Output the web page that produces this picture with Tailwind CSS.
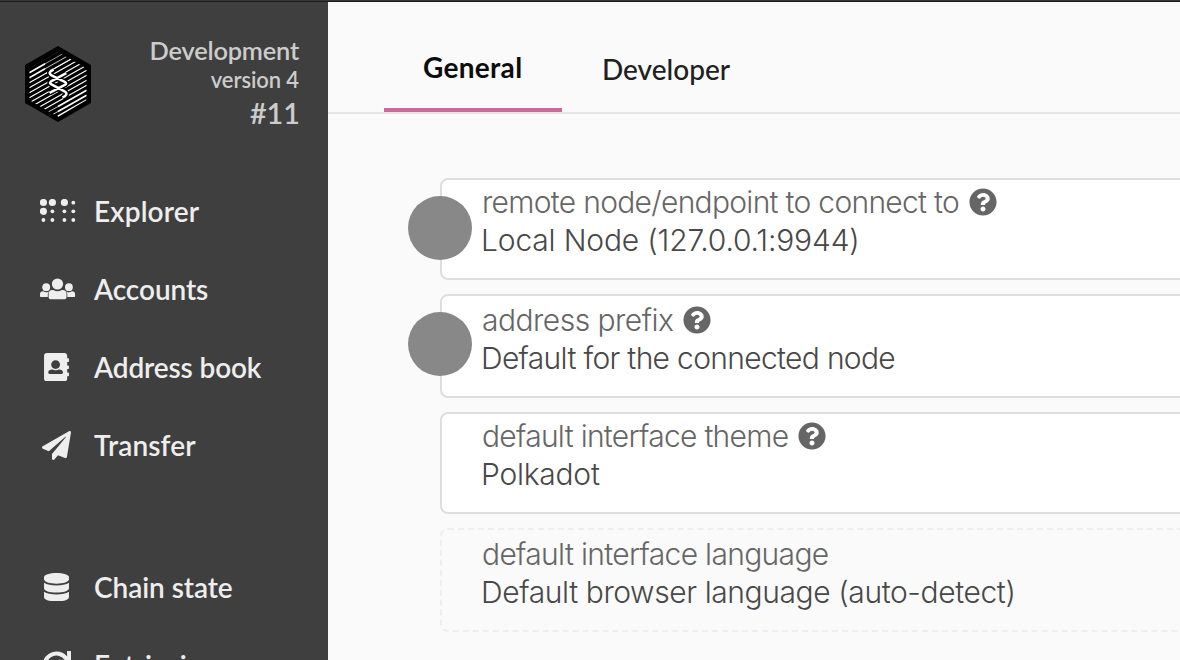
<!DOCTYPE html>
<html lang="en">
<head>
<meta charset="utf-8">
<title>Settings</title>
<script src="https://cdn.jsdelivr.net/npm/@tailwindcss/browser@4"></script>
</head>
<body class="h-[660px] w-[1180px] overflow-hidden bg-[#fafafa]">
<svg class="hidden"><symbol id="help" viewBox="0 0 512 512"><path d="M504 256c0 136.997-111.043 248-248 248S8 392.997 8 256C8 119.083 119.043 8 256 8s248 111.083 248 248zM262.655 90c-54.497 0-89.255 22.957-116.549 63.758-3.536 5.286-2.353 12.415 2.715 16.258l34.699 26.310c5.205 3.947 12.621 3.008 16.665-2.122 17.864-22.658 30.113-35.797 57.303-35.797 20.429 0 45.698 13.148 45.698 32.958 0 14.976-12.363 22.667-32.534 33.976C247.128 238.528 216 254.941 216 296v4c0 6.627 5.373 12 12 12h56c6.627 0 12-5.373 12-12v-1.333c0-28.462 83.186-29.647 83.186-106.667 0-58.002-60.165-102-116.531-102zM256 338c-25.365 0-46 20.635-46 46 0 25.364 20.635 46 46 46s46-20.636 46-46c0-25.365-20.635-46-46-46z"/></symbol></svg>
<div class="flex h-[660px] flex-col overflow-hidden">
  <div class="h-[2px] shrink-0 border-b border-[#1b1b1b] bg-[#363636]"></div>
  <div class="flex min-h-0 grow">
    <aside class="h-[658px] w-[328px] shrink-0 overflow-hidden bg-[#3f3f3f] font-[Lato,sans-serif] font-semibold">
      <header class="flex h-[170px] items-start justify-between pt-[33px] pr-[29px] pl-[25px] text-[#cccccc]">
        <svg class="mt-[11px] h-[76px] w-[66px]" viewBox="0 0 66 76">
          <defs><clipPath id="hex"><path d="M4.3 22.5 33 6l28.7 16.5v31.500L33 71 4.300 54z"/></clipPath></defs>
          <path d="M33 0 66 19v38L33 76 0 57V19z" fill="#000"/>
          <g clip-path="url(#hex)" stroke="#fff">
            <path stroke-width=".6" d="M4.300 21.700 37.500 2.900M20 17.800 42 5.400"/>
            <path stroke-width="1.600" d="M4.300 26.700 20 17.800M4.300 31.700 20 22.800"/>
            <path stroke-width=".8" d="M20 22.800 61.700-.8M20 27.800 61.700 4.200"/>
            <path stroke-width="1.150" d="M4.300 36.700 61.700 4.200M4.300 41.800 61.700 9.300M4.300 46.800 61.700 14.300M4.300 51.800 61.700 19.300M4.300 56.800 61.700 24.300"/>
            <path stroke-width="1.150" d="M4.300 61.700 61.700 29.200M4.300 66.700 61.700 34.200M4.300 71.700 61.700 39.200"/>
            <path stroke-width=".8" d="M4.300 76.700 33 60.500M4.300 81.700 33 65.500"/>
            <path stroke-width="1.700" d="M33 60.500 61.700 44.200M33 65.500 61.700 49.200"/>
            <path stroke-width="2.200" d="M33 70.500 61.700 54.200"/>
          </g>
          <g fill="none" stroke-linejoin="round">
            <path stroke="#000" stroke-width="5.500" d="M28.700 23.500C24 25.500 23.500 27.500 27 29.600L40.300 36.200Q42 37.400 40.300 38.600L24.500 46.900M41.300 27.200 26 35.400Q24 36.800 26 38.200L39.500 45.300C42.500 47.200 42 49.500 37.500 51.500"/>
            <path stroke="#fff" stroke-width="2.500" d="M28.700 23.500C24 25.500 23.500 27.500 27 29.600L40.300 36.200Q42 37.400 40.300 38.600L24.500 46.900M41.300 27.200 26 35.400Q24 36.800 26 38.200L39.500 45.300C42.500 47.200 42 49.500 37.500 51.500"/>
          </g>
        </svg>
        <div class="text-right">
          <div class="text-[25.400px] leading-[30px] tracking-[-0.200px]">Development</div>
          <div class="text-[22px] leading-[29px] tracking-[-0.100px]">version 4</div>
          <div class="-mr-px mt-px text-[28.800px] leading-[36px]">#11</div>
        </div>
      </header>
      <nav class="text-[28px] leading-[32px] text-[#eeeeee]">
        <a class="flex h-[78px] items-center pl-[40px] tracking-[0.150px]">
          <svg class="mr-[18px] h-[24px] w-[36px]" viewBox="0 0 36 24" fill="currentColor"><circle cx="3.400" cy="3.500" r="3.600"/><circle cx="12.400" cy="3.500" r="3.600"/><circle cx="24.400" cy="3.500" r="3.600"/><circle cx="33.300" cy="3.700" r="1.900"/><circle cx="3.400" cy="12.300" r="3.600"/><circle cx="12.400" cy="12.300" r="1.900"/><circle cx="24.400" cy="12.300" r="1.900"/><circle cx="33.300" cy="12.300" r="1.900"/><circle cx="3.400" cy="21" r="1.900"/><circle cx="12.400" cy="21" r="1.900"/><circle cx="24.400" cy="21" r="1.900"/><circle cx="33.300" cy="21" r="1.900"/></svg>
          <span>Explorer</span>
        </a>
        <a class="flex h-[78px] items-center pl-[40px] tracking-[-0.080px]">
          <svg class="mr-[18px] h-[22px] w-[36px]" viewBox="0 0 36 22" fill="currentColor"><circle cx="17.500" cy="6" r="5.600"/><circle cx="6.200" cy="9.200" r="3.900"/><circle cx="28.900" cy="9.200" r="3.900"/><path d="M12.500 12h.7a8 8 0 0 0 8.600 0h.7a4 4 0 0 1 4 4v3.300a1.900 1.900 0 0 1-1.900 1.900H10.500a1.900 1.900 0 0 1-1.900-1.900V16a4 4 0 0 1 3.900-4z"/><path d="M3.200 13.200a5 5 0 0 0 5.700.2 6 6 0 0 0-1.100 3.200v2.500H1.200A1.200 1.200 0 0 1 0 17.900v-1.500a3.200 3.200 0 0 1 3.200-3.200zM31.900 13.200a5 5 0 0 1-5.700.2 6 6 0 0 1 1.100 3.200v2.500h6.600a1.200 1.200 0 0 0 1.200-1.200v-1.500a3.200 3.200 0 0 0-3.200-3.200z"/></svg>
          <span>Accounts</span>
        </a>
        <a class="flex h-[78px] items-center pl-[44px] tracking-[-0.140px]">
          <svg class="mr-[25px] h-[28.500px] w-[25px]" viewBox="0 0 448 512" fill="currentColor"><path d="M436 160c6.600 0 12-5.400 12-12v-40c0-6.600-5.400-12-12-12h-20V48c0-26.500-21.500-48-48-48H48C21.500 0 0 21.500 0 48v416c0 26.500 21.500 48 48 48h320c26.500 0 48-21.500 48-48v-48h20c6.600 0 12-5.400 12-12v-40c0-6.600-5.400-12-12-12h-20v-64h20c6.600 0 12-5.400 12-12v-40c0-6.600-5.400-12-12-12h-20v-64h20zm-228-32c44 0 80 36 80 80s-36 80-80 80-80-36-80-80 36-80 80-80zm132 228.800c0 10.600-10 19.200-22.400 19.200H98.400C86 376 76 367.400 76 356.800v-9.200c0-27.800 30.100-51.600 67.200-51.600h5c17.300 9.100 37.700 14 59.800 14s42.600-4.900 59.800-14h5c37.100 0 67.200 23.800 67.200 51.600v9.200z"/></svg>
          <span>Address book</span>
        </a>
        <a class="flex h-[78px] items-center pl-[42px] tracking-[0.150px]">
          <svg class="mr-[23px] h-[29px] w-[29px]" viewBox="0 0 512 512" fill="currentColor"><path d="M476 3.200 12.500 270.600c-18.100 10.400-15.800 35.600 2.200 43.200L121 358.400l287.300-253.200c5.500-4.900 13.300 2.600 8.600 8.300L176 407v80.500c0 23.600 28.500 32.900 42.500 15.800L282 426l124.600 52.200c14.200 6 30.400-2.900 33-18.200l72-432C515 7.800 493.300-6.800 476 3.200z"/></svg>
          <span>Transfer</span>
        </a>
        <a class="mt-[64px] flex h-[78px] items-center pl-[44px] tracking-[-0.060px]">
          <svg class="mr-[25px] h-[28.500px] w-[25px]" viewBox="0 0 448 512" fill="currentColor"><path d="M448 73.143v45.714C448 159.143 347.667 192 224 192S0 159.143 0 118.857V73.143C0 32.857 100.333 0 224 0s224 32.857 224 73.143zM448 176v102.857C448 319.143 347.667 352 224 352S0 319.143 0 278.857V176c48.125 33.143 136.208 48.572 224 48.572S399.874 209.143 448 176zm0 160v102.857C448 479.143 347.667 512 224 512S0 479.143 0 438.857V336c48.125 33.143 136.208 48.572 224 48.572S399.874 369.143 448 336z"/></svg>
          <span>Chain state</span>
        </a>
        <a class="flex h-[78px] items-center pl-[42px]">
          <svg class="mr-[23px] h-[29px] w-[29px]" viewBox="0 0 512 512" fill="currentColor"><path d="M500.330 0h-47.410a12 12 0 0 0-12 12.570l4 82.760A247.420 247.420 0 0 0 256 8C119.340 8 7.900 119.530 8 256.190 8.100 393.070 119.100 504 256 504a247.100 247.100 0 0 0 166.180-63.910 12 12 0 0 0 .48-17.430l-34-34a12 12 0 0 0-16.380-.55A176 176 0 1 1 402.100 157.800l-101.530-4.870a12 12 0 0 0-12.570 12v47.410a12 12 0 0 0 12 12h200.330a12 12 0 0 0 12-12V12a12 12 0 0 0-12-12z"/></svg>
          <span>Extrinsics</span>
        </a>
      </nav>
    </aside>
    <main class="flex min-w-0 grow flex-col">
      <div class="flex h-[112px] shrink-0 border-b-2 border-[#e5e5e5] pl-[56px] font-[Lato,sans-serif] text-[28px] leading-[32px]">
        <div class="h-[110px] w-[178px] shrink-0 border-b-4 border-[#cb689c] pt-[49px] pl-[39px] font-bold tracking-[0.3px] text-[#0d0d0d]">General</div>
        <div class="pt-[51px] pl-[40px] font-medium text-[#202020]">Developer</div>
      </div>
      <div class="flex flex-col pt-[64px] pl-[112px] font-[Inter,sans-serif] text-[30px] leading-[38px] font-light whitespace-nowrap text-[#484848]">
        <section class="relative mb-[14px] h-[102px] w-[800px] rounded-lg border-2 border-[#dedede] bg-white pt-[3px] pl-[39px]">
          <div class="absolute top-[16px] left-[-34px] size-[64px] rounded-full bg-[#888888]"></div>
          <div class="flex items-center pl-px text-[#666666]"><span class="w-[479px] tracking-[-0.710px]">remote node/endpoint to connect to</span>
            <svg class="ml-[8px] size-[28px]" fill="#666"><use href="#help"/></svg></div>
          <div class="tracking-[-0.170px]">Local Node (127.0.0.1:9944)</div>
        </section>
        <section class="relative mb-[14px] h-[104px] w-[800px] rounded-lg border-2 border-[#dedede] bg-white pt-[5px] pl-[39px]">
          <div class="absolute top-[16px] left-[-34px] size-[64px] rounded-full bg-[#888888]"></div>
          <div class="flex items-center pl-px text-[#666666]"><span class="w-[193px] tracking-[-0.520px]">address prefix</span>
            <svg class="ml-[8px] size-[28px]" fill="#666"><use href="#help"/></svg></div>
          <div class="tracking-[-0.680px]">Default for the connected node</div>
        </section>
        <section class="mb-[14px] h-[102px] w-[800px] rounded-lg border-2 border-[#dedede] bg-white pt-[3px] pl-[39px]">
          <div class="flex items-center pl-px text-[#666666]"><span class="w-[308px] tracking-[-0.720px]">default interface theme</span>
            <svg class="ml-[8px] size-[28px]" fill="#666"><use href="#help"/></svg></div>
          <div class="tracking-[-0.250px]">Polkadot</div>
        </section>
        <section class="h-[104px] w-[800px] rounded-lg border-2 border-dashed border-[#eeeeee] pt-[5px] pl-[39px]">
          <div class="pl-px tracking-[-0.680px] text-[#666666]">default interface language</div>
          <div class="tracking-[-0.400px]">Default browser language (auto-detect)</div>
        </section>
      </div>
    </main>
  </div>
</div>
</body>
</html>
